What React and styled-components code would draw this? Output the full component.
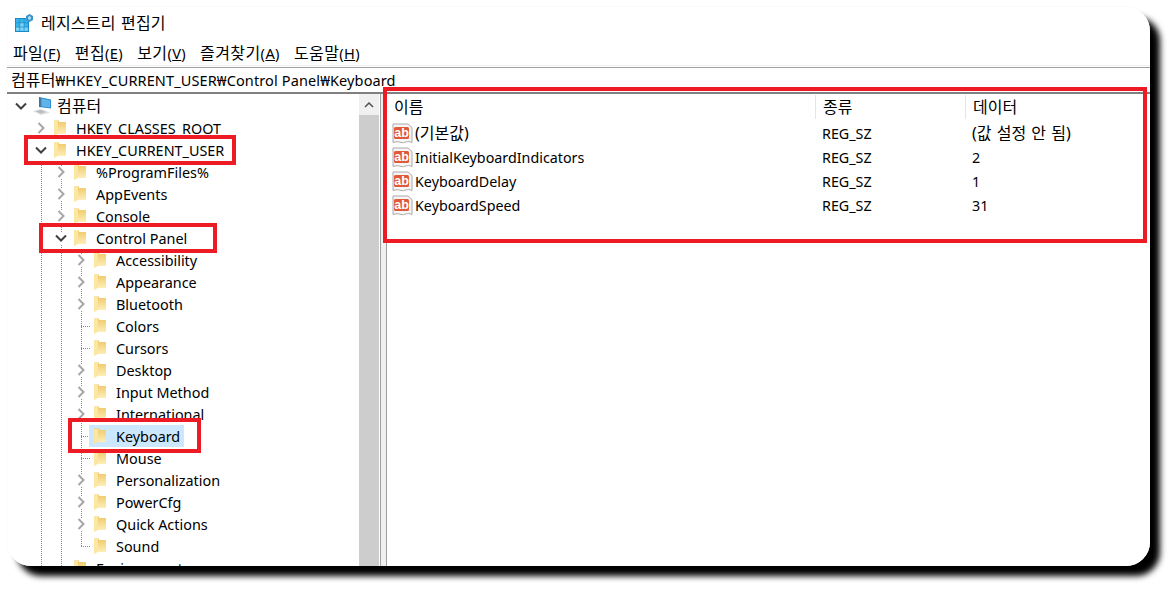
import styled, { createGlobalStyle } from "styled-components";

const GlobalStyle = createGlobalStyle`
  html, body { margin: 0; padding: 0; background: #fff; }
  body { font-family: "Noto Sans", "Noto Sans CJK KR", sans-serif; color: #000; }
`;

const Page = styled.div`
  width: 1175px;
  height: 591px;
  padding: 7px 0 0 7px;
  box-sizing: border-box;
  overflow: hidden;
`;

const Shadow = styled.div`
  width: 1143px;
  border-radius: 24px;
  box-shadow: 10px 10px 6px #000, 0 0 2px #eee;
`;

const Window = styled.div`
  position: relative;
  height: 559px;
  border-radius: 24px;
  background: #fff;
  overflow: hidden;
  display: flex;
  flex-direction: column;
`;

const Ko = styled.span`
  font-size: 16px;
  line-height: 1;
  word-spacing: 1px;
`;

const TitleBar = styled.div`
  height: 31px;
  padding-left: 8px;
  box-sizing: border-box;
  display: flex;
  align-items: center;
  gap: 8px;
  font-size: 14.5px;
  letter-spacing: 0.2px;
`;

const MenuBar = styled.div`
  height: 28px;
  padding: 3px 0 0 6px;
  box-sizing: border-box;
  display: flex;
  align-items: center;
  gap: 14px;
  font-size: 14.6px;
  letter-spacing: 0.4px;
  border-bottom: 1px solid #f0f0f0;
`;

const MenuItem = styled.span`
  u { text-underline-offset: 1px; }
`;

const AddressBar = styled.div`
  margin-top: 1px;
  height: 27px;
  padding: 0 0 1px 4px;
  box-sizing: border-box;
  display: flex;
  align-items: center;
  font-size: 14.5px;
  letter-spacing: 0.12px;
  border-top: 1px solid #a0a0a0;
  border-bottom: 2px solid #808080;
`;

const Panes = styled.div`
  flex: 1;
  min-height: 0;
  display: flex;
`;

const TreePane = styled.div`
  width: 374px;
  padding-right: 1px;
  box-sizing: border-box;
  display: flex;
  border-right: 1px solid #a0a0a0;
`;

const Tree = styled.div`
  flex: 1;
  min-width: 0;
  padding: 1px 0 0 4px;
  overflow: hidden;
`;

const Row = styled.div`
  height: 22px;
  display: flex;
  align-items: center;
  font-size: 14.4px;
  white-space: nowrap;
`;

const dots = `#8a8a8a 0 1px, transparent 1px 2px`;

const Spacer = styled.span`
  flex: none;
  width: 20px;
  height: 22px;
`;

const Guide = styled(Spacer)`
  background: repeating-linear-gradient(to bottom, ${dots}) 10px 0 / 1px 100% no-repeat;
`;

const Connector = styled(Spacer)`
  background:
    repeating-linear-gradient(to bottom, ${dots}) 10px 0 / 1px ${(p) => (p.$last ? "11px" : "100%")} no-repeat,
    repeating-linear-gradient(to right, ${dots}) 10px 11px / 10px 1px no-repeat;
`;

const Expander = styled(Spacer)`
  display: flex;
  align-items: center;
  justify-content: center;
  ${(p) => p.$line && `background: repeating-linear-gradient(to bottom, ${dots}) 10px 0 / 1px 100% no-repeat;`}

  svg { background: #fff; }
`;

const Item = styled.span`
  height: 22px;
  margin-left: -2px;
  padding: 0 4px 0 3px;
  display: flex;
  align-items: center;
  gap: ${(p) => p.$gap}px;
  background: ${(p) => (p.$selected ? "#cce8ff" : "transparent")};
`;

const Scrollbar = styled.div`
  flex: none;
  width: 20px;
  background: #f0f0f0;
  display: flex;
  flex-direction: column;
`;

const ScrollButton = styled.div`
  height: 21px;
  display: flex;
  align-items: center;
  justify-content: center;
`;

const ScrollThumb = styled.div`
  flex: 1;
  background: #cdcdcd;
`;

const Splitter = styled.div`
  flex: none;
  width: 5px;
  background: #f0f0f0;
`;

const ListPane = styled.div`
  flex: 1;
  min-width: 0;
  padding-top: 1px;
  border-left: 1px solid #a0a0a0;
`;

const columns = "429px 150px 1fr";

const ListHeader = styled.div`
  height: 26px;
  padding-bottom: 2px;
  box-sizing: border-box;
  display: grid;
  grid-template-columns: ${columns};
  font-size: 14.5px;
`;

const HeaderCell = styled.div`
  padding-left: 7px;
  display: flex;
  align-items: center;
  border-right: ${(p) => (p.$last ? "none" : "1px solid #e5e5e5")};
`;

const ListRow = styled.div`
  height: 24px;
  display: grid;
  grid-template-columns: ${columns};
  align-items: center;
  font-size: 14.3px;
  white-space: nowrap;
`;

const NameCell = styled.div`
  padding-left: 5px;
  display: flex;
  align-items: center;
  gap: 2px;
`;

const ListCell = styled.div`
  padding-left: 6px;
`;

const RedBox = styled.div`
  position: absolute;
  left: ${(p) => p.$x}px;
  top: ${(p) => p.$y}px;
  width: ${(p) => p.$w}px;
  height: ${(p) => p.$h}px;
  box-sizing: border-box;
  border: 4px solid #ed1c24;
`;

const AppIcon = () => (
  <svg width="18" height="18" viewBox="0 0 18 18">
    <rect x="0" y="4" width="14" height="14" fill="#1b8ac7" />
    <g fill="#38b6ec">
      <rect x="1" y="5" width="3.5" height="3.5" />
      <rect x="5.2" y="5" width="3.5" height="3.5" />
      <rect x="9.4" y="5" width="3.5" height="3.5" />
      <rect x="1" y="9.2" width="3.5" height="3.5" />
      <rect x="9.4" y="9.2" width="3.5" height="3.5" />
    </g>
    <g fill="#7cd4f7">
      <rect x="5.2" y="9.2" width="3.5" height="3.5" />
      <rect x="1" y="13.4" width="3.5" height="3.5" />
      <rect x="5.2" y="13.4" width="3.5" height="3.5" />
      <rect x="9.4" y="13.4" width="3.5" height="3.5" />
    </g>
    <path d="M14.5 0 L18 2 V6 L14.5 8 L11 6 V2 Z" fill="#3c93c9" />
    <path d="M14.5 2 L16 3 V5 L14.5 6 L13 5 V3 Z" fill="#a9def7" />
  </svg>
);

const ComputerIcon = () => (
  <svg width="20" height="20" viewBox="0 0 20 20">
    <path d="M7 1 L19 3.5 V12.5 L7 11 Z" fill="#2f8fd0" />
    <path d="M7 1 L8.5 1.3 V11.2 L7 11 Z" fill="#5d6b78" />
    <path d="M9.5 2.5 L18 4.4 V11.4 L9.5 10.3 Z" fill="#5fb4ea" />
    <path d="M1 15 L9 13 L18 16.5 L9 19 Z" fill="#dcdee0" />
    <path d="M3.5 15.2 L9 14 L14 16 L8.5 17.4 Z" fill="#b9bcc0" />
  </svg>
);

const FolderIcon = () => (
  <svg width="16" height="16" viewBox="0 0 16 16">
    <defs>
      <linearGradient id="folderBody" x1="0" y1="0" x2="0" y2="1">
        <stop offset="0" stopColor="#f0c869" />
        <stop offset="1" stopColor="#fdeeb8" />
      </linearGradient>
    </defs>
    <path d="M2 0.5 H7 V2 H14 V14 H6 V2 H2 Z" fill="url(#folderBody)" />
    <path d="M2 1 L6 1 V14 L2 16 Z" fill="#fbe6a2" />
  </svg>
);

const StringIcon = () => (
  <svg width="21" height="21" viewBox="0 0 21 21">
    <path d="M1 1 H16 L20 4.5 V19.5 C15 17 13 20.5 9 19.5 C6 18.5 4 18.5 1 19.5 Z" fill="#f6f6f6" stroke="#a8a8a8" />
    <rect x="2" y="4" width="15" height="12" rx="1.5" fill="#e0593a" />
    <text x="9.5" y="14" textAnchor="middle" fontFamily="Liberation Sans, sans-serif" fontWeight="700" fontSize="12.5" fill="#fff">
      ab
    </text>
  </svg>
);

const Chevron = ({ open }) => (
  <svg width="12" height="12" viewBox="0 0 12 12">
    {open ? (
      <polyline points="1,3.5 6,8.5 11,3.5" fill="none" stroke="#404040" strokeWidth="2" />
    ) : (
      <polyline points="3.5,1 8.5,6 3.5,11" fill="none" stroke="#a6a6a6" strokeWidth="2" />
    )}
  </svg>
);

const ScrollUp = () => (
  <svg width="10" height="6" viewBox="0 0 10 6">
    <polyline points="1,5 5,1 9,5" fill="none" stroke="#505050" strokeWidth="1.5" />
  </svg>
);

const menus = [
  ["파일", "F"],
  ["편집", "E"],
  ["보기", "V"],
  ["즐겨찾기", "A"],
  ["도움말", "H"],
];

// depth, label, kind: closed | open | leaf | last
const tree = [
  [1, "HKEY_CLASSES_ROOT", "closed"],
  [1, "HKEY_CURRENT_USER", "open"],
  [2, "%ProgramFiles%", "closed"],
  [2, "AppEvents", "closed"],
  [2, "Console", "closed"],
  [2, "Control Panel", "open"],
  [3, "Accessibility", "closed"],
  [3, "Appearance", "closed"],
  [3, "Bluetooth", "closed"],
  [3, "Colors", "leaf"],
  [3, "Cursors", "leaf"],
  [3, "Desktop", "closed"],
  [3, "Input Method", "closed"],
  [3, "International", "closed"],
  [3, "Keyboard", "leaf"],
  [3, "Mouse", "leaf"],
  [3, "Personalization", "closed"],
  [3, "PowerCfg", "closed"],
  [3, "Quick Actions", "closed"],
  [3, "Sound", "last"],
  [2, "Environment", "leaf"],
];

const values = [
  [<Ko>(기본값)</Ko>, "REG_SZ", <Ko>(값 설정 안 됨)</Ko>],
  ["InitialKeyboardIndicators", "REG_SZ", "2"],
  ["KeyboardDelay", "REG_SZ", "1"],
  ["KeyboardSpeed", "REG_SZ", "31"],
];

const boxes = [
  { x: 17, y: 128, w: 212, h: 30 },
  { x: 32, y: 216, w: 178, h: 30 },
  { x: 61, y: 411, w: 133, h: 35 },
  { x: 376, y: 80, w: 764, h: 156 },
];

const TreeRow = ({ depth, label, kind }) => {
  const guides = [];
  for (let i = 1; i < depth; i++) guides.push(<Guide key={i} />);
  const leaf = kind === "leaf" || kind === "last";
  return (
    <Row>
      <Spacer />
      {guides}
      {leaf ? (
        <Connector $last={kind === "last"} />
      ) : (
        <Expander $line={depth > 1}>
          <Chevron open={kind === "open"} />
        </Expander>
      )}
      <Item $gap={8} $selected={label === "Keyboard"}>
        <FolderIcon />
        <span>{label}</span>
      </Item>
    </Row>
  );
};

export default function App() {
  return (
    <>
      <GlobalStyle />
      <Page>
        <Shadow>
          <Window>
            <TitleBar>
              <AppIcon />
              <Ko>레지스트리 편집기</Ko>
            </TitleBar>
            <MenuBar>
              {menus.map(([label, key]) => (
                <MenuItem key={key}>
                  <Ko>{label}</Ko>(<u>{key}</u>)
                </MenuItem>
              ))}
            </MenuBar>
            <AddressBar>
              <span>
                <Ko>컴퓨터</Ko>₩HKEY_CURRENT_USER₩Control Panel₩Keyboard
              </span>
            </AddressBar>
            <Panes>
              <TreePane>
                <Tree>
                  <Row>
                    <Expander>
                      <Chevron open />
                    </Expander>
                    <Item $gap={5}>
                      <ComputerIcon />
                      <Ko>컴퓨터</Ko>
                    </Item>
                  </Row>
                  {tree.map(([depth, label, kind]) => (
                    <TreeRow key={label} depth={depth} label={label} kind={kind} />
                  ))}
                </Tree>
                <Scrollbar>
                  <ScrollButton>
                    <ScrollUp />
                  </ScrollButton>
                  <ScrollThumb />
                </Scrollbar>
              </TreePane>
              <Splitter />
              <ListPane>
                <ListHeader>
                  <HeaderCell>
                    <Ko>이름</Ko>
                  </HeaderCell>
                  <HeaderCell>
                    <Ko>종류</Ko>
                  </HeaderCell>
                  <HeaderCell $last>
                    <Ko>데이터</Ko>
                  </HeaderCell>
                </ListHeader>
                {values.map(([name, type, data], i) => (
                  <ListRow key={i}>
                    <NameCell>
                      <StringIcon />
                      <span>{name}</span>
                    </NameCell>
                    <ListCell>{type}</ListCell>
                    <ListCell>{data}</ListCell>
                  </ListRow>
                ))}
              </ListPane>
            </Panes>
            {boxes.map((b) => (
              <RedBox key={b.x} $x={b.x} $y={b.y} $w={b.w} $h={b.h} />
            ))}
          </Window>
        </Shadow>
      </Page>
    </>
  );
}
